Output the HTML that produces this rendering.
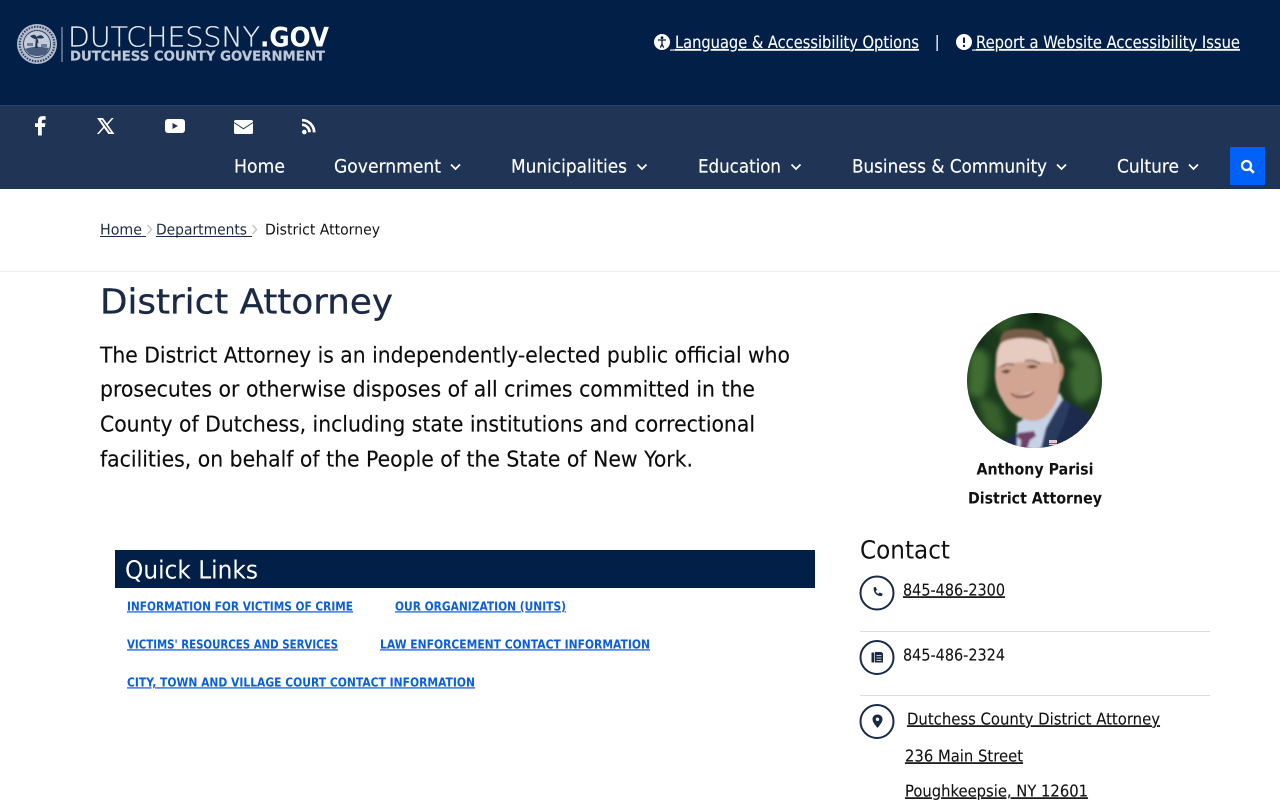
<!DOCTYPE html>
<html lang="en">
<head>
<meta charset="utf-8">
<title>District Attorney</title>
<style>
html,body{margin:0;padding:0;background:#fff;width:1280px;height:800px;overflow:hidden}
svg{display:block}
text{font-family:"DejaVu Sans","Liberation Sans",sans-serif;fill:#000;text-rendering:geometricPrecision;transform:translateY(-.7px)}
.u{text-decoration:underline}
.w{fill:#fff}
.b{font-weight:700}
.q{fill:#0a5ddb;font-weight:700;font-size:12.300px;text-decoration:underline}
.p{font-size:21.800px;fill:#0c0c0c;stroke:#0c0c0c;stroke-width:.15px}
.n{font-size:18.300px;fill:#fff;stroke:#fff;stroke-width:.15px}
.t{font-size:17px;fill:#fff;stroke:#fff;stroke-width:.1px}
.c{font-size:16.300px;fill:#111;stroke:#111;stroke-width:.1px}
</style>
</head>
<body>
<svg width="1280" height="800" viewBox="0 0 1280 800" xmlns="http://www.w3.org/2000/svg">
<defs>
<filter id="bl" x="-10%" y="-10%" width="120%" height="120%"><feGaussianBlur stdDeviation="3.200"/></filter>
<filter id="bs" x="-10%" y="-10%" width="120%" height="120%"><feGaussianBlur stdDeviation="1.100"/></filter>
<clipPath id="cp"><circle cx="1034.500" cy="380.500" r="67.500"/></clipPath>
</defs>

<rect width="1280" height="106" fill="#021f47"/>
<rect y="105" width="1280" height="84" fill="#203555"/>
<rect y="105" width="1280" height="1" fill="#2e4364"/>

<!-- logo seal -->
<circle cx="37" cy="44" r="20" fill="#b4bdcd"/>
<circle cx="37" cy="44" r="17.300" fill="none" stroke="#2b3d5e" stroke-width="2" stroke-dasharray="1.500 1.300"/>
<circle cx="37" cy="44" r="13.500" fill="#c5ccd9" stroke="#33466a" stroke-width="1"/>
<path d="M25 49 q10-4 24-1 l-3 6 q-9 4-17 0z" fill="#4c5d7c"/>
<path d="M36 36 l1.800 12 h-2.600z" fill="#1d2f50"/>
<path d="M30 36 q6-3 6 1 q6-4 8 1 q-4 1-7 0 q2 3 1 6 q-3-4-2-5 q-3 0-6-3z" fill="#24365a"/>
<path d="M27 43 h6 v3 h-6z M41 44 h6 v3 h-6z" fill="#6e7e9a"/>
<rect x="61.500" y="27" width="1" height="35" fill="#aab5c6"/>
<text x="68" y="47" font-size="27.500" font-weight="200" textLength="192" lengthAdjust="spacingAndGlyphs" style="fill:#e6ebf2;stroke:#e6ebf2;stroke-width:.25px">DUTCHESSNY</text>
<text x="260" y="47" font-size="27" class="b w" textLength="69" lengthAdjust="spacingAndGlyphs">.GOV</text>
<text x="70" y="61" font-size="13.500" class="b" textLength="255" lengthAdjust="spacingAndGlyphs" style="fill:#bcc7d8;stroke:#bcc7d8;stroke-width:.2px">DUTCHESS COUNTY GOVERNMENT</text>

<!-- top links -->
<circle cx="662" cy="42" r="8" fill="#fff"/>
<circle cx="662" cy="37.800" r="1.400" fill="#021f47"/>
<path d="M658 40 h8 M662 40 v4 M662 44 l-1.600 3.600 M662 44 l1.600 3.600" stroke="#021f47" stroke-width="1.300" fill="none"/>
<rect x="670" y="49.500" width="6" height="1.100" fill="#fff"/>
<text x="675" y="48.700" class="t u" textLength="244" lengthAdjust="spacingAndGlyphs">Language &amp; Accessibility Options</text>
<rect x="936.500" y="35" width="1.300" height="16" fill="#fff"/>
<circle cx="964" cy="42" r="8" fill="#fff"/>
<path d="M964 37.500 v5.500" stroke="#021f47" stroke-width="2" fill="none"/>
<circle cx="964" cy="46" r="1.200" fill="#021f47"/>
<rect x="972" y="49.500" width="5" height="1.100" fill="#fff"/>
<text x="976" y="48.700" class="t u" textLength="264" lengthAdjust="spacingAndGlyphs">Report a Website Accessibility Issue</text>

<!-- social -->
<path d="M38 135.500 v-8.500 h-3 v-3.800 h3 v-2.500 c0-3 1.900-4.600 4.600-4.600 c1.400 0 2.600 .1 3 .2 v3.400 h-2 c-1.500 0-1.800 .7-1.800 1.800 v1.700 h3.700 l-.6 3.800 h-3.100 v8.500z" fill="#fff"/>
<path d="M97 118 h6 l3.900 5.400 l4.800-5.400 h2 l-5.900 6.700 l6.600 9.300 h-6 l-4.300-6 l-5.200 6 h-2 l6.300-7.200z M100.600 119.800 l9.200 12.400 h1.300 l-9.100-12.400z" fill="#fff"/>
<path d="M168 119 h14 a3 3 0 0 1 3 3 v8 a3 3 0 0 1-3 3 h-14 a3 3 0 0 1-3-3 v-8 a3 3 0 0 1 3-3z" fill="#fff"/>
<path d="M172.500 123 l5.500 3 l-5.500 3z" fill="#203555"/>
<rect x="234" y="120" width="19" height="14" rx="1.800" fill="#fff"/>
<path d="M234 122.500 l9.500 6.300 l9.500-6.300" fill="none" stroke="#203555" stroke-width="1"/>
<circle cx="304.300" cy="132" r="2.300" fill="#fff"/>
<path d="M302 124.800 a7.500 7.500 0 0 1 7.500 7.500 M302 120.200 a12.200 12.200 0 0 1 12.200 12.200" fill="none" stroke="#fff" stroke-width="2.700"/>

<!-- nav -->
<text x="234" y="173" class="n" textLength="51" lengthAdjust="spacingAndGlyphs">Home</text>
<text x="334" y="173" class="n" textLength="107" lengthAdjust="spacingAndGlyphs">Government</text>
<text x="511" y="173" class="n" textLength="116" lengthAdjust="spacingAndGlyphs">Municipalities</text>
<text x="698" y="173" class="n" textLength="83" lengthAdjust="spacingAndGlyphs">Education</text>
<text x="852" y="173" class="n" textLength="195" lengthAdjust="spacingAndGlyphs">Business &amp; Community</text>
<text x="1117" y="173" class="n" textLength="62" lengthAdjust="spacingAndGlyphs">Culture</text>
<g fill="none" stroke="#fff" stroke-width="1.700">
<path d="M451 164.500 l4.500 4.500 l4.500-4.500"/>
<path d="M637.500 164.500 l4.500 4.500 l4.500-4.500"/>
<path d="M791.500 164.500 l4.500 4.500 l4.500-4.500"/>
<path d="M1057 164.500 l4.500 4.500 l4.500-4.500"/>
<path d="M1189 164.500 l4.500 4.500 l4.500-4.500"/>
</g>
<rect x="1230" y="147" width="35" height="38" fill="#0061f9"/>
<circle cx="1246.500" cy="165.500" r="4.500" fill="none" stroke="#fff" stroke-width="2.200"/>
<path d="M1250 169 l3.800 3.800" stroke="#fff" stroke-width="2.600" fill="none"/>

<!-- breadcrumb -->
<text x="100" y="235" font-size="14.800" textLength="42" lengthAdjust="spacingAndGlyphs" style="fill:#1a2a44">Home</text>
<rect x="100" y="236" width="46" height="1" fill="#1a2a44"/>
<path d="M147.500 225 l4 4.500 l-4 4.500" fill="none" stroke="#c8c8c8" stroke-width="1.500"/>
<text x="156" y="235" font-size="14.800" textLength="91" lengthAdjust="spacingAndGlyphs" style="fill:#1a2a44">Departments</text>
<rect x="156" y="236" width="96" height="1" fill="#1a2a44"/>
<path d="M252.500 225 l4 4.500 l-4 4.500" fill="none" stroke="#c8c8c8" stroke-width="1.500"/>
<text x="265" y="235" font-size="14.800" textLength="115" lengthAdjust="spacingAndGlyphs" style="fill:#111">District Attorney</text>
<rect y="271" width="1280" height="1" fill="#eeeeee"/>

<!-- title and intro -->
<text x="100" y="314" font-size="34.500" textLength="293" lengthAdjust="spacingAndGlyphs" style="fill:#1a2a44;stroke:#1a2a44;stroke-width:.3px">District Attorney</text>
<text x="100" y="363" class="p" textLength="690" lengthAdjust="spacingAndGlyphs">The District Attorney is an independently-elected public official who</text>
<text x="100" y="397" class="p" textLength="655" lengthAdjust="spacingAndGlyphs">prosecutes or otherwise disposes of all crimes committed in the</text>
<text x="100" y="432" class="p" textLength="655" lengthAdjust="spacingAndGlyphs">County of Dutchess, including state institutions and correctional</text>
<text x="100" y="467" class="p" textLength="593" lengthAdjust="spacingAndGlyphs">facilities, on behalf of the People of the State of New York.</text>

<!-- portrait -->
<g clip-path="url(#cp)">
<rect x="960" y="306" width="150" height="150" fill="#1b3a1d"/>
<g filter="url(#bl)">
<path d="M970 352 q10-6 18 4 q2 20-4 40 q-10 4-16-4z" fill="#3f6e31"/>
<path d="M978 400 q12-4 22 8 l6 24 q-14 4-22-10z" fill="#37612a"/>
<path d="M1000 316 q12-4 18 2 l-12 16 q-8 0-10-6z" fill="#2f5526"/>
<path d="M1058 318 q14 2 24 14 l-8 12 q-12-4-18-16z" fill="#36602c"/>
<path d="M1070 350 q16-6 28 12 q4 20-2 34 l-16 8 q-10-8-10-22z" fill="#3d6b31"/>
<circle cx="1036" cy="315" r="8" fill="#0e2110"/>
<circle cx="978" cy="342" r="6" fill="#10261a"/>
<circle cx="1072" cy="365" r="4" fill="#193419"/>
</g>
<g filter="url(#bs)">
<path d="M1003 456 l2-15 l14-11 l16 8 l26-40 l32 18 l-8 20 l-30 16 v10z" fill="#1f2c4d"/>
<path d="M1017 423 v30 l23 0 l23-54 l-3-6 l-18 14z" fill="#c6d2e6"/>
<path d="M1040 452 l6-24 l10-18 l7-11 l7 5 l-6 20 l-14 28z" fill="#2a3a60"/>
<path d="M1018 433 l16-2 l2 5 l-6 4 l-4 12 h-6 l1-12 l-4-3z" fill="#70416b"/>
<path d="M1055 363 c3-2 9-1 9 7 c0 8-3 14-8 14z" fill="#c4917b"/>
<path d="M1000 343 c-3 6-4 10-4 13 l-1 20 c1 10 3 17 7 23 c4 8 9 14 15 17 c6 3 11 5 15 5 c7 0 13-3 16-7 c5-6 9-12 10-18 l2-13 v-20 c-1-8-5-17-9-24 c-14-6-38-5-51 4z" fill="#d2a592"/>
<path d="M1001 344 c13-8 34-9 47-4 c5 7 8 15 9 24 c-16-4-44-3-60 3 c0-9 1-16 4-23z" fill="#e6cbc1"/>
<path d="M1000 342 c0-5 2-8 4-10 c6-3 14-4 21-3 c6 0 12 1 16 3 c3 3 6 7 8 12 c-14-7-34-8-49-2z" fill="#775b47"/>
<path d="M1048 341 c4 6 7 14 9 22 l-3 1 c-2-9-4-16-6-23z" fill="#a58a78"/>
<path d="M1001 367 q6-5 13-2 M1025 361 q8-2 15 3" stroke="#6e5144" stroke-width="1.500" fill="none"/>
<path d="M1002 372 q4-3 8-1 l-3 2z M1027 367 q6-3 10 0 l-5 1z" fill="#4a342b" stroke="#4a342b" stroke-width=".8"/>
<path d="M1010 393 q12 3 25-2 q-4 7-13 7 q-8 1-12-5z" fill="#8a4d42"/>
<path d="M1012 394 q11 2 21-3 q-2 3-9 4 q-7 1-12-1z" fill="#f3ece6"/>
</g>
<path d="M1049 440 h8 v5 h-8z" fill="#d9cdd2"/>
<path d="M1049 443 h8 v1 h-8z" fill="#a44a5a"/>
</g>
<text x="1035" y="475" font-size="15.800" class="b" text-anchor="middle" textLength="117" lengthAdjust="spacingAndGlyphs" style="fill:#111">Anthony Parisi</text>
<text x="1035" y="504" font-size="15.800" class="b" text-anchor="middle" textLength="134" lengthAdjust="spacingAndGlyphs" style="fill:#111">District Attorney</text>

<!-- quick links -->
<rect x="115" y="550" width="700" height="38" fill="#021f47"/>
<text x="125" y="579" font-size="25" class="w" textLength="133" lengthAdjust="spacingAndGlyphs">Quick Links</text>
<text x="127" y="611" class="q" textLength="226" lengthAdjust="spacingAndGlyphs">INFORMATION FOR VICTIMS OF CRIME</text>
<text x="395" y="611" class="q" textLength="171" lengthAdjust="spacingAndGlyphs">OUR ORGANIZATION (UNITS)</text>
<text x="127" y="649" class="q" textLength="211" lengthAdjust="spacingAndGlyphs">VICTIMS' RESOURCES AND SERVICES</text>
<text x="380" y="649" class="q" textLength="270" lengthAdjust="spacingAndGlyphs">LAW ENFORCEMENT CONTACT INFORMATION</text>
<text x="127" y="687" class="q" textLength="348" lengthAdjust="spacingAndGlyphs">CITY, TOWN AND VILLAGE COURT CONTACT INFORMATION</text>

<!-- contact -->
<text x="860" y="559" font-size="25" textLength="90" lengthAdjust="spacingAndGlyphs" style="fill:#111">Contact</text>
<g fill="none" stroke="#1a2a44" stroke-width="2">
<circle cx="877" cy="593" r="16.500"/>
<circle cx="877" cy="657.500" r="16.500"/>
<circle cx="877" cy="721.500" r="16.500"/>
</g>
<path d="M873.500 587.500 l2.200-.6 l1.300 3 l-1.400 1.200 c.6 1.300 1.500 2.200 2.800 2.800 l1.200-1.400 l3 1.300 l-.6 2.200 c-5.500 .5-8.800-3.500-8.300-8.500z" fill="#1a2a44"/>
<rect x="871.500" y="652.500" width="2.800" height="10" rx=".6" fill="#1a2a44"/>
<path d="M875 652 h6.500 l1.500 1.500 v9 h-8z" fill="#1a2a44"/>
<path d="M876.500 655.500 h5 M876.500 658 h5 M876.500 660.500 h5" stroke="#fff" stroke-width=".8"/>
<path d="M877.500 714.500 c-3 0-5 2.200-5 4.800 c0 3 3.300 6.500 5 8.700 c1.700-2.200 5-5.700 5-8.700 c0-2.600-2-4.800-5-4.800z" fill="#1a2a44"/>
<circle cx="877.500" cy="719.300" r="1.700" fill="#fff"/>
<text x="903" y="596" class="c u" textLength="102" lengthAdjust="spacingAndGlyphs">845-486-2300</text>
<rect x="860" y="631" width="350" height="1" fill="#dcdcdc"/>
<text x="903" y="661" class="c" textLength="102" lengthAdjust="spacingAndGlyphs">845-486-2324</text>
<rect x="860" y="695" width="350" height="1" fill="#dcdcdc"/>
<text x="907" y="725" class="c u" textLength="253" lengthAdjust="spacingAndGlyphs">Dutchess County District Attorney</text>
<text x="905" y="762" class="c u" textLength="118" lengthAdjust="spacingAndGlyphs">236 Main Street</text>
<text x="905" y="797" class="c u" textLength="183" lengthAdjust="spacingAndGlyphs">Poughkeepsie, NY 12601</text>
</svg>
</body>
</html>
